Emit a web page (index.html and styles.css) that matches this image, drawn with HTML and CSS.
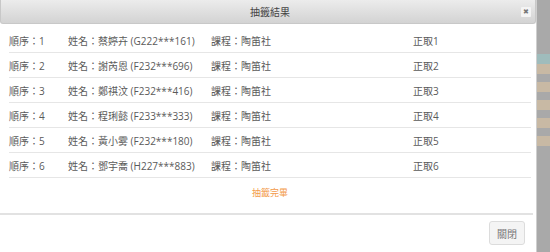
FILE: index.html
```html
<!DOCTYPE html>
<html lang="zh-Hant">
<head>
    <meta charset="UTF-8">
    <title>抽籤結果</title>
    <link rel="stylesheet" href="styles.css">
</head>
<body>

<div class="page">
    <div class="dialog">
        <div class="titlebar">
            <span class="title">抽籤結果</span>
            <span class="close">✖</span>
        </div>
        <div class="content">
            <div class="row"><span class="c1">順序：1</span><span class="c2">姓名：蔡婷卉 (G222***161)</span><span class="c3">課程：陶笛社</span><span class="c4">正取1</span></div>
            <div class="row"><span class="c1">順序：2</span><span class="c2">姓名：謝芮恩 (F232***696)</span><span class="c3">課程：陶笛社</span><span class="c4">正取2</span></div>
            <div class="row"><span class="c1">順序：3</span><span class="c2">姓名：鄭祺汶 (F232***416)</span><span class="c3">課程：陶笛社</span><span class="c4">正取3</span></div>
            <div class="row"><span class="c1">順序：4</span><span class="c2">姓名：程琍懿 (F233***333)</span><span class="c3">課程：陶笛社</span><span class="c4">正取4</span></div>
            <div class="row"><span class="c1">順序：5</span><span class="c2">姓名：黃小雾 (F232***180)</span><span class="c3">課程：陶笛社</span><span class="c4">正取5</span></div>
            <div class="row"><span class="c1">順序：6</span><span class="c2">姓名：鄧宇喬 (H227***883)</span><span class="c3">課程：陶笛社</span><span class="c4">正取6</span></div>
            <div class="done">抽籤完畢</div>
        </div>
        <div class="footer">
            <button class="btn">關閉</button>
        </div>
    </div>
    <div class="side">
        <div class="side-top"></div>
        <div class="side-tan"></div>
        <div class="side-tan"></div>
        <div class="side-tan"></div>
        <div class="side-tan"></div>
        <div class="side-tan"></div>
    </div>
</div>

</body>
</html>
```

FILE: styles.css
```css
body {
    margin: 0;
    font-family: "Open Sans", "Noto Sans CJK TC", sans-serif;
    font-size: 10px;
    color: #5a5a5a;
    background: #fff;
}

.page {
    display: flex;
    width: 550px;
    height: 252px;
    overflow: hidden;
}

.dialog {
    width: 536px;
    border-right: 1px solid #cfcfcf;
    background: #fff;
    display: flex;
    flex-direction: column;
}

.dialog > div {
    flex-shrink: 0;
}

.titlebar {
    height: 24px;
    display: flex;
    align-items: center;
    justify-content: center;
    position: relative;
    background: linear-gradient(#ececec, #d3d3d3);
    border: 1px solid #c8c8c8;
    border-top: none;
    border-radius: 0 0 3px 3px;
    box-sizing: border-box;
}

.title {
    color: #444;
    font-size: 10px;
    margin-left: 4px;
}

.close {
    position: absolute;
    right: 4px;
    top: 7px;
    width: 10px;
    height: 10px;
    font-size: 7px;
    line-height: 10px;
    text-align: center;
    color: #777;
    background: #f4f4f4;
    border-radius: 1px;
}

.content {
    padding: 4px 5px 0 9px;
    height: 188px;
    box-sizing: border-box;
}

.row {
    display: flex;
    align-items: center;
    height: 24px;
    border-bottom: 1px solid #e6e6e6;
    white-space: nowrap;
}

.row span {
    display: block;
}

.c1 {
    width: 59px;
}

.c2 {
    width: 143px;
}

.c3 {
    width: 202px;
}

.c4 {
    flex: 1;
}

.done {
    text-align: center;
    color: #f39a4a;
    font-size: 9px;
    margin-top: 8px;
}

.footer {
    border-top: 2px solid #e2e2e2;
    margin-top: 1px;
    margin-right: 3px;
    display: flex;
    justify-content: flex-end;
    padding: 6px 8px 0 0;
}

.btn {
    width: 36px;
    height: 24px;
    padding: 0;
    font-family: inherit;
    font-size: 10px;
    color: #777;
    background: #f4f4f4;
    border: 1px solid #dcdcdc;
    border-radius: 3px;
}

.side {
    flex: 1;
    background: #a9a9a9;
    display: flex;
    flex-direction: column;
    padding-top: 54px;
    gap: 8px;
}

.side-top {
    height: 10px;
    background: #9fbcbc;
    margin-bottom: -8px;
}

.side-tan {
    height: 10px;
    background: #c8b9a4;
}
```
